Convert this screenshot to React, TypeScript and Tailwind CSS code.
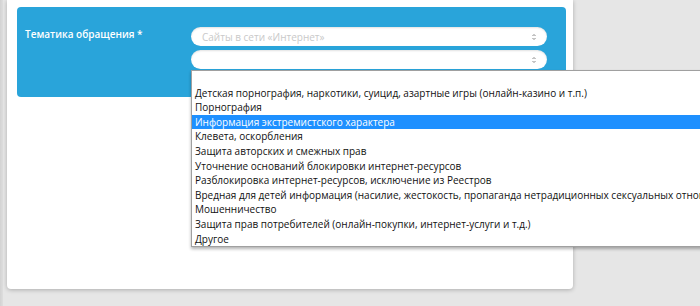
import React from "react";

const options = [
  "",
  "Детская порнография, наркотики, суицид, азартные игры (онлайн-казино и т.п.)",
  "Порнография",
  "Информация экстремистского характера",
  "Клевета, оскорбления",
  "Защита авторских и смежных прав",
  "Уточнение оснований блокировки интернет-ресурсов",
  "Разблокировка интернет-ресурсов, исключение из Реестров",
  "Вредная для детей информация (насилие, жестокость, пропаганда нетрадиционных сексуальных отношений и т.п.)",
  "Мошенничество",
  "Защита прав потребителей (онлайн-покупки, интернет-услуги и т.д.)",
  "Другое",
];

function Arrows() {
  return (
    <svg width="6" height="10" viewBox="0 0 6 10" className="shrink-0">
      <path d="M1.5 4 L3 2.5 L4.5 4" fill="none" stroke="#8a8a8a" strokeWidth="1" />
      <path d="M1.5 6 L3 7.5 L4.5 6" fill="none" stroke="#8a8a8a" strokeWidth="1" />
    </svg>
  );
}

function Select({ placeholder }: { placeholder?: string }) {
  return (
    <div className="flex h-[19px] w-[356px] items-center justify-between rounded-full bg-white pl-[11px] pr-[10px] shadow-[inset_0_1px_2px_rgba(0,0,0,0.12)]">
      <span className="text-[10px] leading-none text-[#c9c9c9]">{placeholder}</span>
      <Arrows />
    </div>
  );
}

export default function App() {
  return (
    <div
      className="relative flex h-[306px] w-[700px] overflow-hidden bg-[#e6e6e6]"
      style={{ fontFamily: '"Open Sans", "Noto Sans", sans-serif' }}
    >
      <div className="h-full w-[3px] bg-gradient-to-r from-[#d2d2d2] to-[#dedede]" />
      <div className="ml-[4px] h-[289px] w-[566px] rounded-b-[4px] bg-white pl-[10px] pr-[7px] pt-[7px] shadow-[0_1px_4px_rgba(0,0,0,0.25)]">
        <div className="flex h-[90px] rounded-[4px] bg-[#29a4da] pl-[8px] pt-[20px]">
          <div className="w-[166px] text-[10px] font-semibold leading-[14px] text-white">
            Тематика обращения *
          </div>
          <div className="flex flex-col gap-[4px]">
            <Select placeholder="Сайты в сети «Интернет»" />
            <Select />
          </div>
        </div>
      </div>

      <div className="absolute left-[191px] top-[70px] w-[540px] border border-[#a0a0a0] bg-white shadow-[0_2px_3px_rgba(0,0,0,0.3)]">
        {options.map((o, i) => (
          <div
            key={i}
            className={`h-[14.6px] whitespace-nowrap pl-[3px] text-[10px] leading-[14.6px] ${
              i === 3 ? "bg-[#1e90ff] text-white" : "text-[#111]"
            }`}
          >
            {o}
          </div>
        ))}
      </div>
    </div>
  );
}
